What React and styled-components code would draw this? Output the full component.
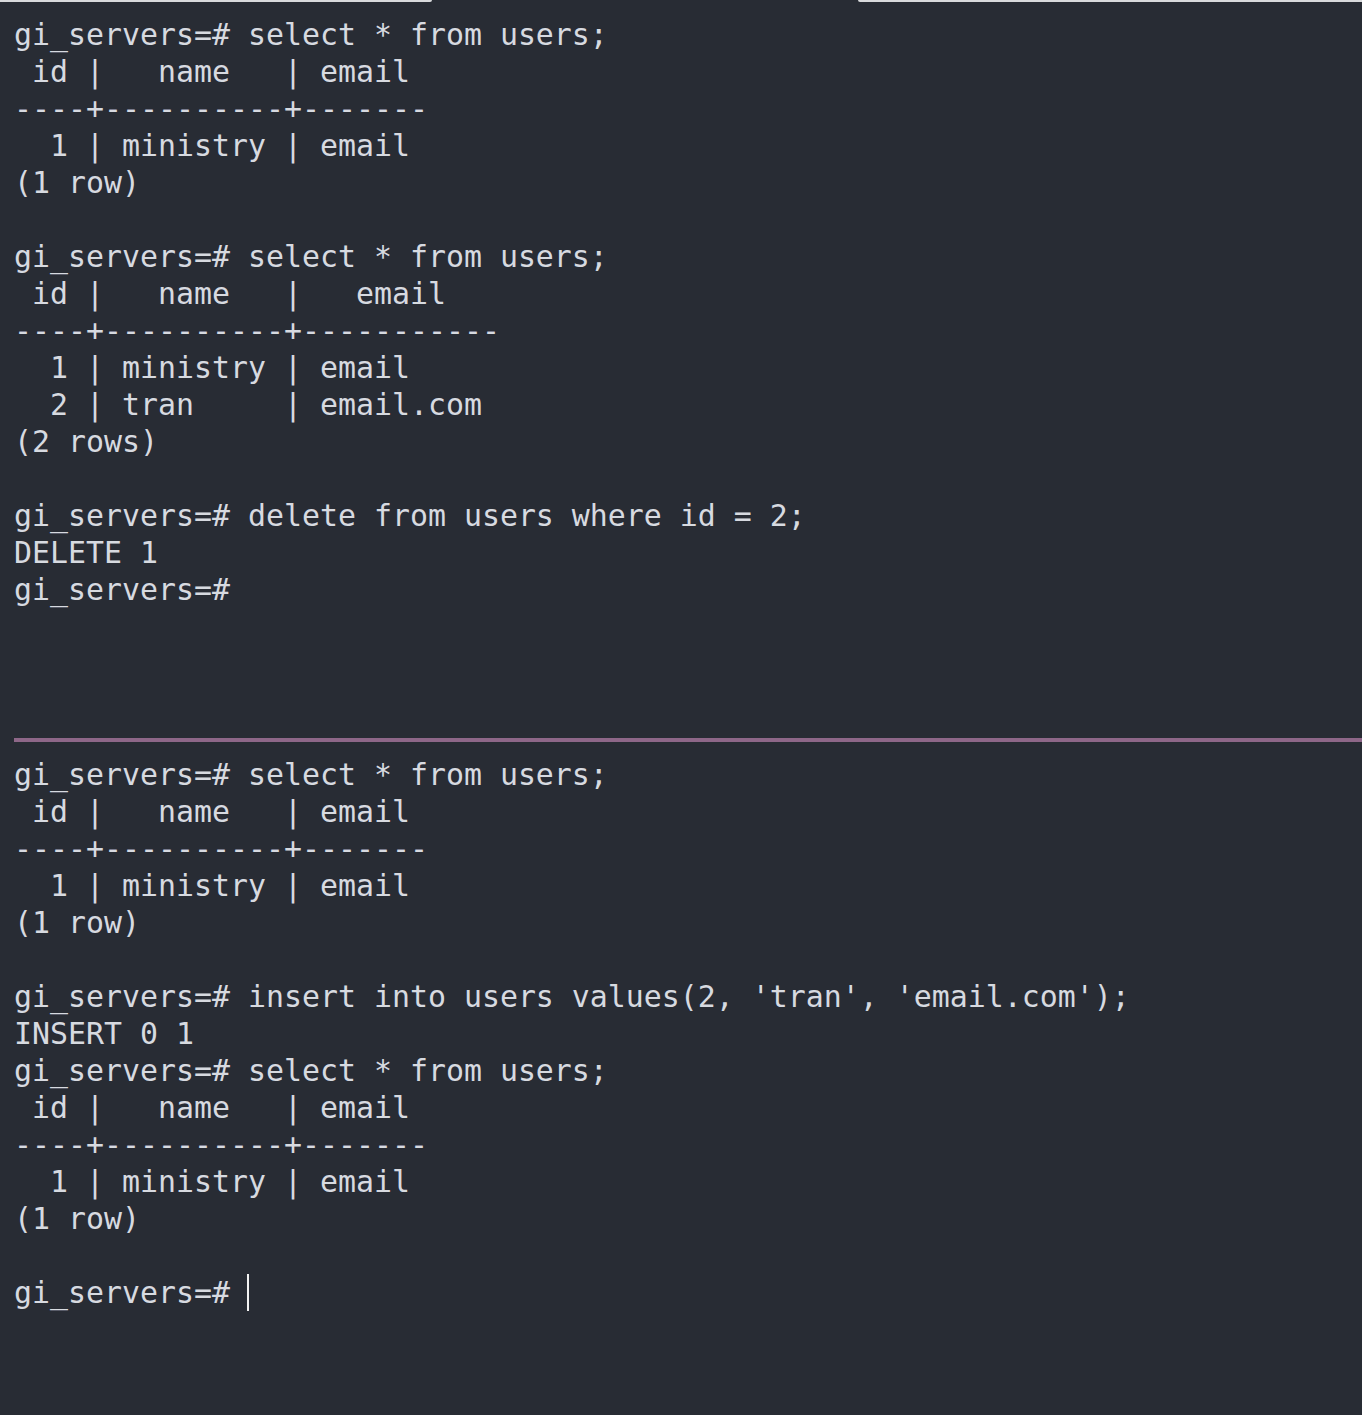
import React from "react";
import styled, { createGlobalStyle } from "styled-components";

const Global = createGlobalStyle`
  html, body { margin: 0; padding: 0; background: #282c34; }
  body { overflow: hidden; }
`;

const Screen = styled.div`
  width: 1362px;
  height: 1415px;
  background: #282c34;
  display: flex;
  flex-direction: column;
  font-family: "DejaVu Sans Mono", "Liberation Mono", monospace;
`;

const TabStrip = styled.div`
  display: flex;
  justify-content: space-between;
  height: 2px;
  flex: none;
`;

const TabEdge = styled.div`
  height: 2px;
  width: ${(p) => p.$w}px;
  background: #d9dadc;
  border-radius: ${(p) => (p.$side === "left" ? "0 0 3px 0" : "0 0 0 3px")};
`;

const Pane = styled.div`
  height: ${(p) => p.$h}px;
  flex: none;
  padding: ${(p) => p.$top}px 0 0 14px;
  box-sizing: border-box;
`;

const Line = styled.pre`
  margin: 0;
  height: 37px;
  line-height: 37px;
  font-family: inherit;
  font-size: 29.9px;
  color: #d7dae0;
  white-space: pre;
  display: flex;
  align-items: center;
`;

const Divider = styled.div`
  height: 4px;
  margin-left: 14px;
  background: #8e6788;
  flex: none;
`;

const Cursor = styled.span`
  display: inline-block;
  width: 2px;
  height: 37px;
  background: #f2f2f2;
  margin-left: -1px;
`;

const top = [
  "gi_servers=# select * from users;",
  " id |   name   | email",
  "----+----------+-------",
  "  1 | ministry | email",
  "(1 row)",
  "",
  "gi_servers=# select * from users;",
  " id |   name   |   email",
  "----+----------+-----------",
  "  1 | ministry | email",
  "  2 | tran     | email.com",
  "(2 rows)",
  "",
  "gi_servers=# delete from users where id = 2;",
  "DELETE 1",
  "gi_servers=#",
];

const bottom = [
  "gi_servers=# select * from users;",
  " id |   name   | email",
  "----+----------+-------",
  "  1 | ministry | email",
  "(1 row)",
  "",
  "gi_servers=# insert into users values(2, 'tran', 'email.com');",
  "INSERT 0 1",
  "gi_servers=# select * from users;",
  " id |   name   | email",
  "----+----------+-------",
  "  1 | ministry | email",
  "(1 row)",
  "",
];

export default function App() {
  return (
    <Screen>
      <Global />
      <TabStrip>
        <TabEdge $w={432} $side="left" />
        <TabEdge $w={504} $side="right" />
      </TabStrip>
      <Pane $h={736} $top={14}>
        {top.map((t, i) => (
          <Line key={i}>{t || " "}</Line>
        ))}
      </Pane>
      <Divider />
      <Pane $h={673} $top={14}>
        {bottom.map((t, i) => (
          <Line key={i}>{t || " "}</Line>
        ))}
        <Line>
          {"gi_servers=# "}
          <Cursor />
        </Line>
      </Pane>
    </Screen>
  );
}
